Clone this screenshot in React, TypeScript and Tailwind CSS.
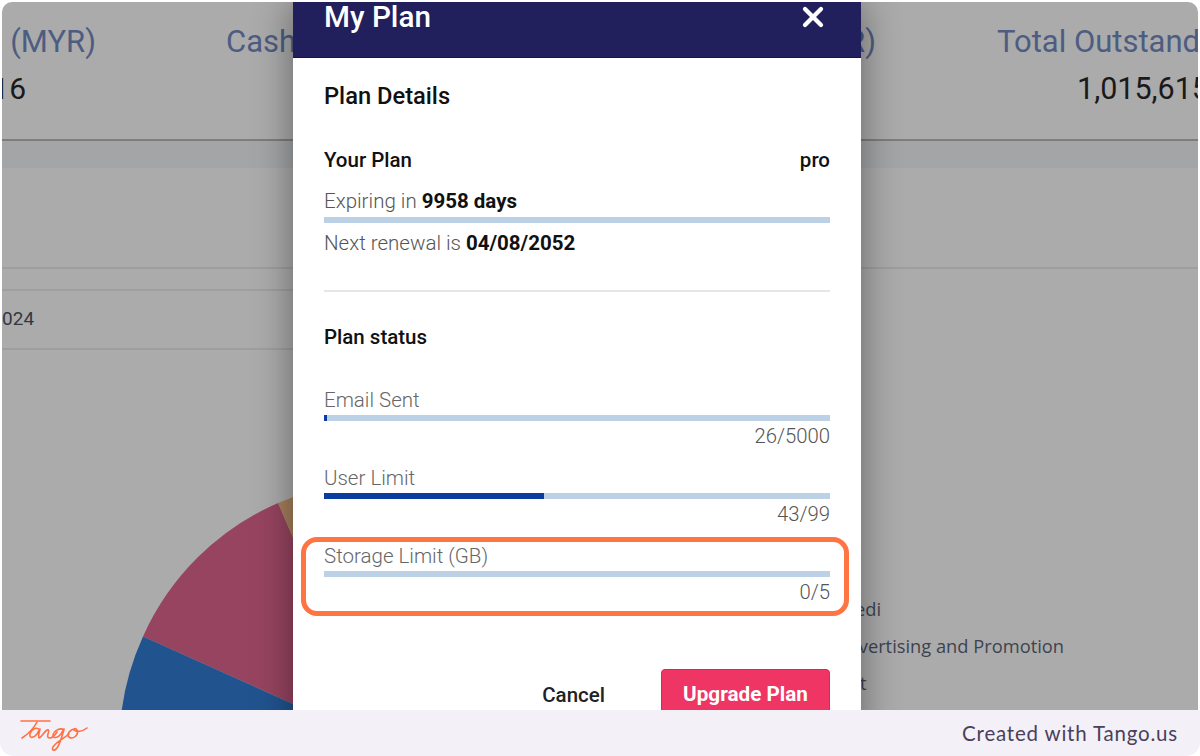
import { X } from 'lucide-react'

const roboto = { fontFamily: 'Roboto, sans-serif' }

function Bar({ fill = 0 }: { fill?: number }) {
  return (
    <div className="h-[6px] w-full bg-[#bcd0e6]">
      <div className="h-full bg-[#0b3da0]" style={{ width: fill }} />
    </div>
  )
}

function PieChart() {
  return (
    <svg width="524" height="361" viewBox="120 481 524 361" className="shrink-0">
      <path d="M382 744 L278.1 503 A262.5 262.5 0 0 0 143 636.5 Z" fill="#974460" />
      <path d="M382 744 L143 636.5 A262.5 262.5 0 0 0 122 780 L382 780 Z" fill="#21538f" />
      <path d="M382 744 L278.1 503 A262.5 262.5 0 0 1 340 485 L382 500 Z" fill="#a67f5a" />
    </svg>
  )
}

function TangoLogo() {
  return (
    <svg width="90" height="46" viewBox="0 0 90 46" fill="none" stroke="#ff7043" strokeWidth="1.6" strokeLinecap="round" strokeLinejoin="round">
      <path d="M11 11 H40" />
      <path d="M27 12 C24 18 18 24 12 28" />
      <path d="M30 20 C26 16 21 20 20 24 C19 29 24 28 27 24 L30 19 C29 23 28 26 29 28 C31 28 34 22 37 20 C39 19 39 21 38 24 C37 27 38 28 40 28 C43 28 45 25 47 22" />
      <path d="M54 20 C50 17 44 21 43 25 C43 29 48 28 51 24 L54 19 C52 27 50 34 47 38 C45 41 41 41 43 37 C46 32 53 29 59 24" />
      <path d="M65 19 C60 19 56 25 59 27 C63 30 69 25 67 20 C66 18 64 18 64 20 C66 22 72 22 77 18" />
    </svg>
  )
}

function Backdrop() {
  return (
    <div className="h-full flex flex-col bg-[#ababab] overflow-hidden" style={roboto}>
      <div className="h-[139px] shrink-0 flex border-b-2 border-[#7d7d7d] whitespace-nowrap text-[#4d5d82] text-[31px]">
        <div className="w-[94px] shrink-0 flex flex-col items-end pt-[22px]">
          <div className="leading-[36px]">Total (MYR)</div>
          <div className="leading-[36px] text-[30px] text-[#1a1a1a] mt-[11px] mr-[70px]">1,015,616</div>
        </div>
        <div className="ml-[130px] w-[650px] shrink-0 flex justify-between pt-[22px]">
          <div className="leading-[36px]">Cash Balance</div>
          <div className="leading-[36px]">Total (MYR)</div>
        </div>
        <div className="ml-[121px] shrink-0 flex flex-col items-start pt-[22px]">
          <div className="leading-[36px]">Total Outstanding</div>
          <div className="leading-[36px] text-[30.5px] text-[#1a1a1a] mt-[11px] ml-[80px]">1,015,615</div>
        </div>
      </div>
      <div className="h-[27px] shrink-0 bg-[#a4a5a7]" />
      <div className="h-[101px] shrink-0 border-b-2 border-[#9e9e9e]" />
      <div className="h-[22px] shrink-0 border-b-2 border-[#9e9e9e] w-[400px]" />
      <div className="h-[59px] shrink-0 border-b-2 border-[#9e9e9e] w-[400px] flex items-center">
        <div className="shrink-0 -ml-[69px] text-[19px] text-[#33383f] whitespace-nowrap">01/01/2024</div>
      </div>
      <div className="flex-1 flex pl-[118px] pt-[131px] min-h-0">
        <PieChart />
        <div className="ml-[192px] pt-[109px] flex flex-col text-[18.3px] leading-[37px] text-[#3d4450] whitespace-nowrap" style={{ fontFamily: '"Open Sans", sans-serif' }}>
          <div>Credi</div>
          <div>Advertising and Promotion</div>
          <div>Net</div>
        </div>
      </div>
    </div>
  )
}

function StatusRow({ label, value, fill = 0 }: { label: string; value: string; fill?: number }) {
  return (
    <div>
      <div className="text-[20.5px] leading-[25px] mb-[2px] text-[#666] font-light">{label}</div>
      <Bar fill={fill} />
      <div className="text-right text-[20.3px] leading-[26px] font-light text-[#555] mt-[2px]">{value}</div>
    </div>
  )
}

function PlanModal() {
  return (
    <div className="absolute left-[291px] top-0 w-[568px] h-[760px] bg-white flex flex-col shadow-[0_0_36px_rgba(0,0,0,0.42)]" style={roboto}>
      <div className="h-[56px] shrink-0 bg-[#211f5c] border-b border-[#15134a] flex justify-between pl-[31px] pr-[32px] text-white">
        <div className="text-[29.7px] leading-[30px] font-medium">My Plan</div>
        <X size={32} strokeWidth={3.2} className="-mt-[1px]" />
      </div>
      <div className="flex-1 px-[31px] text-[#111]">
        <h2 className="text-[23.7px] leading-[30px] font-medium mt-[23px]">Plan Details</h2>
        <div className="flex justify-between items-center mt-[36px] text-[20.5px] leading-[26px] font-medium">
          <span>Your Plan</span>
          <span>pro</span>
        </div>
        <div className="text-[20.5px] leading-[26px] font-light text-[#555] mt-[15px]">
          Expiring in <b className="font-bold text-[#111]">9958 days</b>
        </div>
        <div className="mt-[3px]"><Bar /></div>
        <div className="text-[20.5px] leading-[26px] font-light text-[#555] mt-[7px]">
          Next renewal is <b className="font-bold text-[#111]">04/08/2052</b>
        </div>
        <div className="h-[2px] bg-[#e6e6e6] mt-[34px]" />
        <h3 className="text-[20.5px] leading-[26px] font-medium mt-[32px]">Plan status</h3>
        <div className="mt-[38px] flex flex-col gap-[17px]">
          <StatusRow label="Email Sent" value="26/5000" fill={3} />
          <StatusRow label="User Limit" value="43/99" fill={220} />
          <StatusRow label="Storage Limit (GB)" value="0/5" />
        </div>
        <div className="flex justify-end items-start gap-[56px] mt-[64px]">
          <button className="text-[20.5px] leading-[26px] font-medium text-[#222] mt-[13px]">Cancel</button>
          <button className="w-[169px] h-[52px] rounded-[4px] bg-[#ee3563] border border-[#e91e5a] text-white text-[20.7px] font-bold">Upgrade Plan</button>
        </div>
      </div>
    </div>
  )
}

export default function App() {
  return (
    <div className="w-[1200px] h-[756px] bg-white flex flex-col overflow-hidden">
      <div className="flex-1 min-h-0 pt-[2px] px-[2px]">
        <div className="relative h-full rounded-t-[10px] overflow-hidden">
          <Backdrop />
          <PlanModal />
          <div className="absolute left-[299px] top-[535px] w-[548px] h-[79px] rounded-[16px] border-[5px] border-[#ff7442]" />
        </div>
      </div>
      <div className="h-[46px] shrink-0 bg-[#f3f1f7] rounded-b-[14px] flex items-center justify-between pl-[10px] pr-[22px]">
        <TangoLogo />
        <span className="text-[20.5px] tracking-[0.8px] text-[#4a3f5c]" style={{ fontFamily: 'Lato, sans-serif' }}>Created with Tango.us</span>
      </div>
    </div>
  )
}
